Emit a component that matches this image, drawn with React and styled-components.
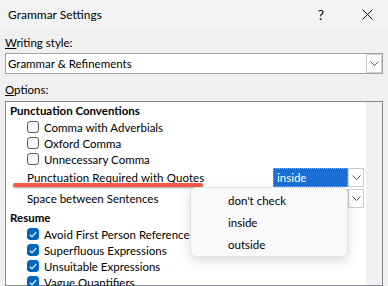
import React from 'react'
import styled, { createGlobalStyle } from 'styled-components'

const GlobalStyle = createGlobalStyle`
  html, body {
    margin: 0;
    padding: 0;
    background: #f0f0f0;
  }
  body {
    font-family: Lato, "Noto Sans", "Liberation Sans", sans-serif;
    font-size: 11.5px;
    color: #000;
  }
`

const Dialog = styled.div`
  width: 388px;
  height: 286px;
  overflow: hidden;
  display: flex;
  flex-direction: column;
  background: #f0f0f0;
`

const TitleBar = styled.div`
  height: 28px;
  flex: none;
  display: flex;
  align-items: center;
  background: #f3f3f3;
  padding-left: 8px;
`

const Title = styled.div`
  flex: 1;
  font-size: 12px;
`

const TitleButton = styled.div`
  width: ${p => p.$w}px;
  height: 28px;
  display: flex;
  align-items: center;
  justify-content: center;
  font-size: 14px;
`

const Body = styled.div`
  flex: 1;
  display: flex;
  flex-direction: column;
  padding: 0 5px;
  min-height: 0;
`

const Label = styled.div`
  height: 16px;
  line-height: 16px;
  margin-top: ${p => p.$top}px;
`

const Combo = styled.div`
  margin-top: 2px;
  height: 21px;
  box-sizing: border-box;
  border: 1px solid #a3a3a3;
  background: #fff;
  display: flex;
  align-items: stretch;
`

const ComboText = styled.div`
  flex: 1;
  padding-left: 2px;
  line-height: 19px;
`

const ArrowButton = styled.div`
  width: 16px;
  box-sizing: border-box;
  border: 1px solid #cdcdcd;
  background: #fff;
  display: flex;
  align-items: center;
  justify-content: center;
`

const ListBox = styled.div`
  margin-top: 3px;
  flex: 1;
  border: 1px solid #828790;
  background: #fff;
  display: flex;
  position: relative;
  min-height: 0;
`

const ListContent = styled.div`
  flex: 1;
  display: flex;
  flex-direction: column;
`

const ScrollTrack = styled.div`
  width: 16px;
  background: #f0f0f0;
`

const Header = styled.div`
  height: 17px;
  line-height: 17px;
  padding-left: 4px;
  font-weight: 700;
  flex: none;
`

const CheckRow = styled.div`
  height: 16px;
  flex: none;
  display: flex;
  align-items: center;
  gap: 5px;
  padding-left: 21px;
`

const Box = styled.span`
  width: 12px;
  height: 12px;
  box-sizing: border-box;
  border-radius: 3px;
  display: inline-flex;
  align-items: center;
  justify-content: center;
  border: 1px solid ${p => (p.$checked ? '#0067c0' : '#5c5c5c')};
  background: ${p => (p.$checked ? '#0067c0' : '#f6f6f6')};
`

const DropRow = styled.div`
  height: 21px;
  flex: none;
  display: flex;
  align-items: center;
  padding-left: 21px;
  padding-right: 2px;
  position: relative;
`

const DropLabel = styled.div`
  flex: 1;
  letter-spacing: ${p => p.$spread || 0}px;
`

const Field = styled.div`
  width: 75px;
  height: 19px;
  box-sizing: border-box;
  line-height: 17px;
  padding-left: 3px;
  color: ${p => (p.$active ? '#fff' : '#000')};
  background: ${p => (p.$active ? '#1a6fd4' : '#fff')};
  border: 1px ${p => (p.$active ? 'dotted #f0a048' : 'solid #cdcdcd')};
`

const FieldButton = styled(ArrowButton)`
  height: 19px;
`

const Marker = styled.span`
  position: absolute;
  left: 7px;
  top: 16px;
  width: 190px;
  height: 4px;
  border-radius: 2px;
  background: #f25a48;
  box-shadow: 0 1px 2px rgba(90, 20, 10, 0.45);
`

const Popup = styled.div`
  position: absolute;
  left: 184px;
  top: 85px;
  width: 158px;
  height: 70px;
  box-sizing: border-box;
  padding-top: 2px;
  background: #f9f9f9;
  border: 1px solid #e2e2e2;
  border-radius: 6px;
  box-shadow: 0 4px 12px rgba(0, 0, 0, 0.14);
`

const PopupItem = styled.div`
  height: 22px;
  line-height: 22px;
  padding-left: 37px;
`

const Chevron = () => (
  <svg width="9" height="5" viewBox="0 0 9 5">
    <path d="M0.5 0.5 L4.5 4.5 L8.5 0.5" fill="none" stroke="#555" strokeWidth="1" />
  </svg>
)

const Check = () => (
  <svg width="8" height="7" viewBox="0 0 8 7">
    <path d="M0.8 3.6 L3 5.7 L7.2 1.2" fill="none" stroke="#fff" strokeWidth="1.2" />
  </svg>
)

const CloseIcon = () => (
  <svg width="11" height="11" viewBox="0 0 11 11">
    <path d="M0.5 0.5 L10.5 10.5 M10.5 0.5 L0.5 10.5" stroke="#111" strokeWidth="1" />
  </svg>
)

const CheckItem = ({ label, checked }) => (
  <CheckRow>
    <Box $checked={checked}>{checked && <Check />}</Box>
    {label}
  </CheckRow>
)

const punctuation = ['Comma with Adverbials', 'Oxford Comma', 'Unnecessary Comma']
const resume = [
  'Avoid First Person Reference',
  'Superfluous Expressions',
  'Unsuitable Expressions',
  'Vague Quantifiers',
]

export default function App() {
  return (
    <Dialog>
      <GlobalStyle />
      <TitleBar>
        <Title>Grammar Settings</Title>
        <TitleButton $w={50}>?</TitleButton>
        <TitleButton $w={42}><CloseIcon /></TitleButton>
      </TitleBar>
      <Body>
        <Label $top={7}><u>W</u>riting style:</Label>
        <Combo>
          <ComboText>Grammar &amp; Refinements</ComboText>
          <ArrowButton><Chevron /></ArrowButton>
        </Combo>
        <Label $top={8}><u>O</u>ptions:</Label>
        <ListBox>
          <ListContent>
            <Header>Punctuation Conventions</Header>
            {punctuation.map(t => <CheckItem key={t} label={t} />)}
            <DropRow>
              <Marker />
              <DropLabel $spread={0.1}>Punctuation Required with Quotes</DropLabel>
              <Field $active>inside</Field>
              <FieldButton><Chevron /></FieldButton>
            </DropRow>
            <DropRow>
              <DropLabel>Space between Sentences</DropLabel>
              <Field />
              <FieldButton><Chevron /></FieldButton>
            </DropRow>
            <Header>Resume</Header>
            {resume.map(t => <CheckItem key={t} label={t} checked />)}
          </ListContent>
          <ScrollTrack />
          <Popup>
            <PopupItem>don't check</PopupItem>
            <PopupItem>inside</PopupItem>
            <PopupItem>outside</PopupItem>
          </Popup>
        </ListBox>
      </Body>
    </Dialog>
  )
}
